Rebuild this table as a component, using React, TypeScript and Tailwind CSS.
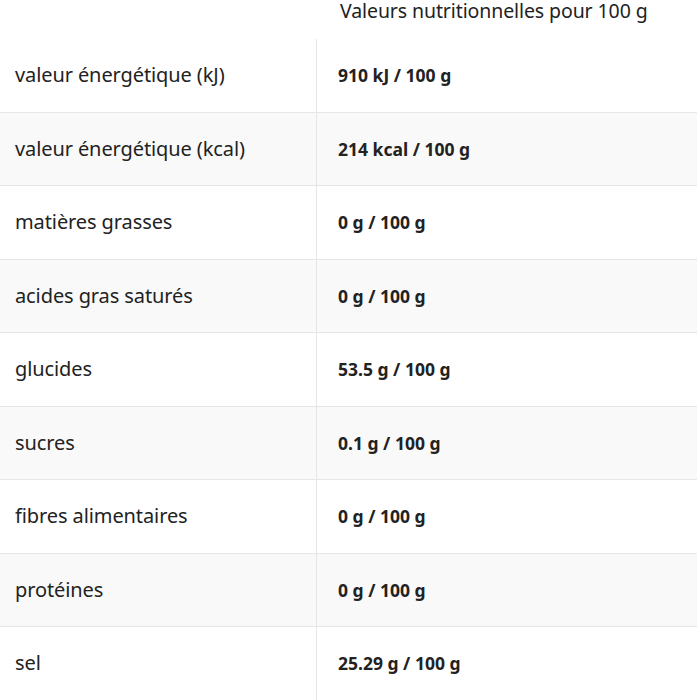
import React from 'react';

const rows: [string, string][] = [
  ['valeur énergétique (kJ)', '910 kJ / 100 g'],
  ['valeur énergétique (kcal)', '214 kcal / 100 g'],
  ['matières grasses', '0 g / 100 g'],
  ['acides gras saturés', '0 g / 100 g'],
  ['glucides', '53.5 g / 100 g'],
  ['sucres', '0.1 g / 100 g'],
  ['fibres alimentaires', '0 g / 100 g'],
  ['protéines', '0 g / 100 g'],
  ['sel', '25.29 g / 100 g'],
];

const App: React.FC = () => {
  return (
    <div className="w-[697px] h-[700px] overflow-hidden bg-white text-[#222]" style={{ fontFamily: '"Noto Sans", "Open Sans", sans-serif' }}>
      {/* Header */}
      <div className="grid grid-cols-[317px_1fr] h-[39px]">
        <div />
        <div className="pl-[23px] pt-[1px] text-[19.5px] leading-[20px] tracking-[-0.1px] whitespace-nowrap">
          Valeurs nutritionnelles pour 100 g
        </div>
      </div>

      {/* Rows */}
      {rows.map(([label, value], index) => (
        <div
          key={label}
          className={`grid grid-cols-[317px_1fr] h-[73.5px] border-b border-[#e6e6e6] ${index % 2 === 1 ? 'bg-[#f9f9f9]' : 'bg-white'}`}
        >
          <div className="flex items-center pl-[15px] text-[20px] tracking-[-0.1px] border-r border-[#e6e6e6]">
            {label}
          </div>
          <div className="flex items-center pl-[21px] text-[17.5px] font-bold">
            {value}
          </div>
        </div>
      ))}
    </div>
  );
};

export default App;
